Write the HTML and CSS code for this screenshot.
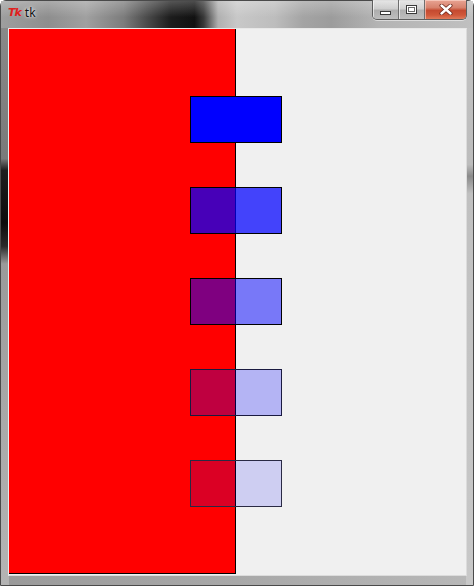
FILE: index.html
```html
<!DOCTYPE html>
<html>
<head>
<meta charset="utf-8">
<title>tk</title>
<link rel="stylesheet" href="styles.css">
</head>
<body>
<div class="window">
  <div class="titlebar">
    <div class="title-left">
      <span class="app-icon">Tk</span>
      <span class="title">tk</span>
    </div>
    <div class="caption-buttons">
      <div class="cbtn min"><span class="glyph-min"></span></div>
      <div class="cbtn max"><span class="glyph-max"></span></div>
      <div class="cbtn close">
        <svg width="14" height="11" viewBox="0 0 14 11">
          <path d="M2.5 1.5 L11.5 9.5 M11.5 1.5 L2.5 9.5" stroke="#6a2418" stroke-width="4" stroke-linecap="round" fill="none"/>
          <path d="M2.5 1.5 L11.5 9.5 M11.5 1.5 L2.5 9.5" stroke="#ffffff" stroke-width="2.4" stroke-linecap="round" fill="none"/>
        </svg>
      </div>
    </div>
  </div>
  <div class="client">
    <div class="canvas">
      <div class="red-rect"></div>
      <svg class="item r1" width="92" height="47" viewBox="0 0 92 47"><rect x="0.5" y="0.5" width="91" height="46" fill="#0000ff" stroke="#000"/></svg>
      <svg class="item r2" width="92" height="47" viewBox="0 0 92 47"><rect class="st75" x="0.5" y="0.5" width="91" height="46" stroke="#000"/></svg>
      <svg class="item r3" width="92" height="47" viewBox="0 0 92 47"><rect class="st50" x="0.5" y="0.5" width="91" height="46" stroke="#000"/></svg>
      <svg class="item r4" width="92" height="47" viewBox="0 0 92 47"><rect class="st25" x="0.5" y="0.5" width="91" height="46" stroke="#1a1a40"/></svg>
      <svg class="item r5" width="92" height="47" viewBox="0 0 92 47"><rect class="st12" x="0.5" y="0.5" width="91" height="46" stroke="#2a2a44"/></svg>
    </div>
  </div>
</div>
</body>
</html>
```
FILE: styles.css
```css
html, body {
  margin: 0;
  padding: 0;
  width: 474px;
  height: 586px;
  overflow: hidden;
  background: #ffffff;
}

.window {
  box-sizing: border-box;
  width: 474px;
  height: 586px;
  display: flex;
  flex-direction: column;
  border: 1px solid #4a4a4a;
  border-radius: 6px 6px 0 0;
  background:
    linear-gradient(to bottom, #8c8c8c 0%, #7a7a7a 27%, #1e1e1e 29%, #0c0c0c 38%, #2a2a2a 42%, #9a9a9a 45%, #a8a8a8 70%, #b4b4b4 100%) left top / 8px 100% no-repeat,
    linear-gradient(to bottom, #c4c4c4 0%, #bcbcbc 28%, #8a8a8a 30%, #c0c0c0 33%, #c8c8c8 100%) right top / 7px 100% no-repeat,
    linear-gradient(to right, #9a9a9a 0%, #a8a8a8 50%, #b8b8b8 100%);
  font-family: "Noto Sans", "DejaVu Sans", sans-serif;
}

.titlebar {
  height: 27px;
  flex: none;
  display: flex;
  justify-content: space-between;
  align-items: flex-start;
  background:
    linear-gradient(to bottom, rgba(255,255,255,0.25), rgba(255,255,255,0) 60%),
    linear-gradient(to right, #9e9e9e 0%, #8e8e8e 10%, #a0a0a0 18%, #7c7c7c 26%, #4a4a4a 31%, #1c1c1c 36%, #111111 41%, #3a3a3a 43%, #b0b0b0 46%, #c8c8c8 50%, #bdbdbd 58%, #a4a4a4 64%, #9c9c9c 70%, #b4b4b4 80%, #c0c0c0 100%);
}

.title-left {
  display: flex;
  align-items: center;
  gap: 4px;
  padding: 5px 0 0 7px;
}

.app-icon {
  color: #e0201c;
  font-family: "DejaVu Sans", sans-serif;
  font-weight: bold;
  font-style: italic;
  font-size: 11px;
  letter-spacing: -1px;
  line-height: 14px;
}

.title {
  color: #101010;
  font-size: 12px;
  line-height: 14px;
  text-shadow: 0 0 4px rgba(255,255,255,0.8), 0 0 2px rgba(255,255,255,0.8);
}

.caption-buttons {
  display: flex;
  margin-right: 6px;
  margin-top: -1px;
  height: 19px;
  border: 1px solid #5e5e5e;
  border-top: none;
  border-radius: 0 0 5px 5px;
  overflow: hidden;
  box-shadow: 0 1px 0 rgba(255,255,255,0.5);
}

.cbtn {
  display: flex;
  align-items: center;
  justify-content: center;
  height: 19px;
}

.cbtn.min, .cbtn.max {
  width: 25px;
  background: linear-gradient(to bottom, rgba(255,255,255,0.55) 0%, rgba(235,235,235,0.35) 45%, rgba(150,150,150,0.35) 55%, rgba(200,200,200,0.5) 100%);
  border-right: 1px solid #6e6e6e;
  box-shadow: inset 1px 1px 0 rgba(255,255,255,0.6);
}

.cbtn.close {
  width: 41px;
  background: linear-gradient(to bottom, #e8a493 0%, #d7826d 40%, #c54a30 55%, #d0583a 80%, #e07a5a 100%);
  box-shadow: inset 1px 1px 0 rgba(255,220,210,0.6);
}

.glyph-min {
  display: block;
  width: 9px;
  height: 2px;
  margin-top: 6px;
  background: #ffffff;
  border: 1px solid #3a3a3a;
}

.glyph-max {
  display: block;
  box-sizing: border-box;
  width: 11px;
  height: 9px;
  border: 1px solid #3a3a3a;
  background: #ffffff;
  box-shadow: inset 0 0 0 1px #ffffff, inset 0 0 0 2px #6a6a6a;
}

.client {
  flex: 1;
  display: flex;
  margin: 0 6px 9px 7px;
  border: 1px solid #e8e8e8;
  border-right-color: #dcdcdc;
  border-bottom-color: #dcdcdc;
}

.canvas {
  position: relative;
  flex: 1;
  display: flex;
  background: #f0f0f0;
  overflow: hidden;
}

.red-rect {
  width: 226px;
  background: #ff0000;
  border-right: 1px solid #000000;
  border-bottom: 1px solid #000000;
  margin-bottom: 1px;
}

.item {
  position: absolute;
  left: 181px;
  display: block;
}

.st75 { fill: #0000ff; fill-opacity: 0.72; }
.st50 { fill: #0000ff; fill-opacity: 0.5; }
.st25 { fill: #0000ff; fill-opacity: 0.25; }
.st12 { fill: #0000ff; fill-opacity: 0.14; }

.r1 { top: 67px; }
.r2 { top: 158px; }
.r3 { top: 249px; }
.r4 { top: 340px; }
.r5 { top: 431px; }
```
